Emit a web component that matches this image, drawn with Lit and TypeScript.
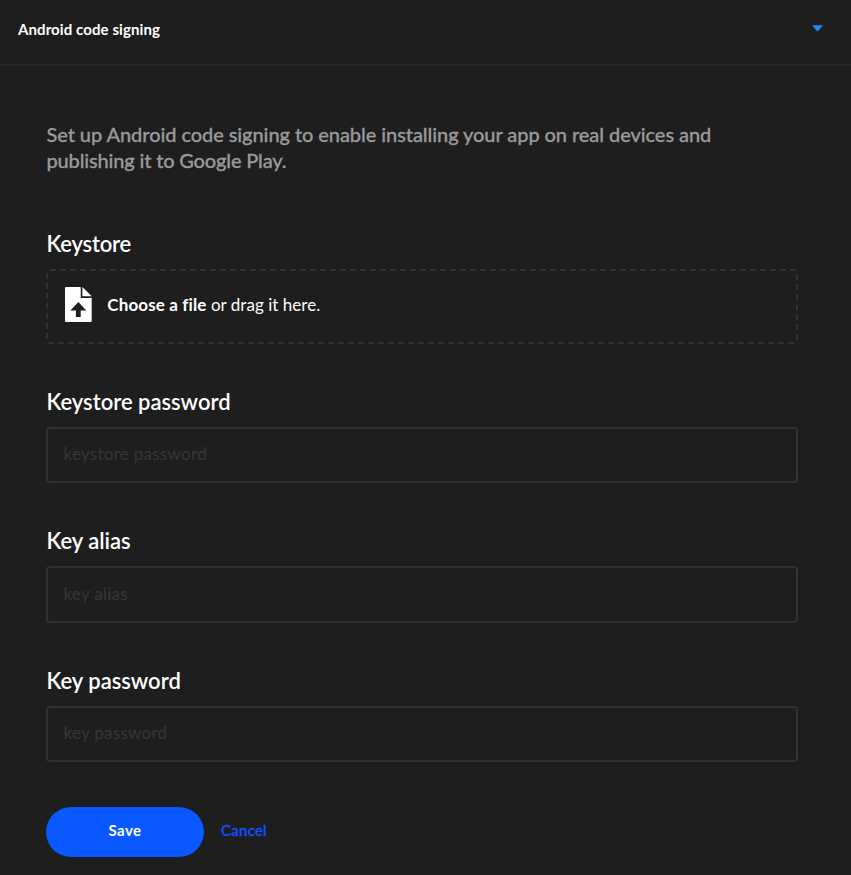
import { LitElement, html, css } from "lit";
import { customElement, property } from "lit/decorators.js";

@customElement("text-field")
class TextField extends LitElement {
  @property() label = "";
  @property() hint = "";

  static styles = css`
    :host { display: block; height: 139.6px; }
    .label { display: block; box-sizing: border-box; height: 40px; padding: 1px 0 0 0.5px; line-height: 28px; font-size: 22px; font-weight: 600; letter-spacing: -0.02px; color: #fff; white-space: nowrap; }
    .input { display: block; box-sizing: border-box; width: 100%; height: 56.35px; margin: 0; padding: 0 15.5px 2px; border: 2px solid #323232; border-radius: 4px; background: transparent; color: #fff; font: 17px Lato, "Liberation Sans", sans-serif; letter-spacing: 0.28px; outline: none; }
    .input::placeholder { color: #353535; opacity: 1; -webkit-text-stroke: 0.2px #353535; }
  `;

  render() {
    return html`<label class="label" for="field">${this.label}</label>
      <input class="input" id="field" placeholder=${this.hint} />`;
  }
}

@customElement("app-root")
class AppRoot extends LitElement {
  static styles = css`
    :host { display: block; box-sizing: border-box; height: 875px; overflow: hidden; background: #1e1e1e; color: #fff; font-family: Lato, "Liberation Sans", sans-serif; }
    .header { display: flex; justify-content: space-between; box-sizing: border-box; height: 66px; padding: 19px 28px 0 18px; border-bottom: 2px solid #292929; }
    .title { font-size: 15px; line-height: 20px; font-weight: 700; letter-spacing: 0.09px; white-space: nowrap; }
    .caret { display: block; width: 11px; height: 6px; margin-top: 6px; }
    .body { padding: 55px 53px 0 46px; }
    .intro { margin: 0; padding-left: 0.5px; height: 108.6px; font-size: 20px; line-height: 26px; font-weight: 500; color: #999; white-space: nowrap; -webkit-text-stroke: 0.3px #999; }
    .line1 { letter-spacing: -0.07px; }
    .line2 { letter-spacing: -0.16px; }
    .heading { height: 39.4px; padding-left: 0.5px; line-height: 28px; font-size: 22px; font-weight: 600; letter-spacing: -0.2px; }
    .drop { display: flex; align-items: center; box-sizing: border-box; height: 75px; margin-bottom: 42.6px; padding: 0 17px 4px; border: 2px dashed #323232; border-radius: 4px; }
    .file { display: block; width: 27px; height: 35px; margin-right: 15.3px; }
    .prompt { padding-top: 2px; font-size: 17px; line-height: 24px; letter-spacing: 0.03px; white-space: nowrap; }
    .strong { font-weight: 700; letter-spacing: 0.13px; }
    .actions { display: flex; align-items: center; gap: 17px; height: 50px; padding-top: 2px; }
    .save { width: 158px; height: 50px; padding: 0 0 4px; border: 0; border-radius: 25px; background: #0a58ff; color: #fff; font: 700 15px Lato, "Liberation Sans", sans-serif; letter-spacing: 0.4px; }
    .cancel { padding-bottom: 4px; font-size: 15px; line-height: 20px; font-weight: 500; letter-spacing: 0.25px; color: #1450ff; -webkit-text-stroke: 0.3px #1450ff; }
  `;

  render() {
    return html`
      <header class="header">
        <div class="title">Android code signing</div>
        <svg class="caret" viewBox="0 0 11 6"><path d="M0 .3H11L6.3 5.7Q5.5 6.4 4.7 5.7Z" fill="#1b8cf5" /></svg>
      </header>
      <main class="body">
        <p class="intro"><span class="line1">Set up Android code signing to enable installing your app on real devices and</span><br /><span class="line2">publishing it to Google Play.</span></p>
        <div class="heading">Keystore</div>
        <div class="drop">
          <svg class="file" viewBox="0 0 27 35">
            <path fill="#fff" fill-rule="evenodd" d="M1 0H15.7V11H26.7V34Q26.7 35 25.7 35H1Q0 35 0 34V1Q0 0 1 0ZM13.4 15L5.3 23.4H10.9V30H15.7V23.4H21.3Z" />
            <path fill="#fff" d="M17.4 0L26.7 9.3H17.4Z" />
          </svg>
          <div class="prompt"><span class="strong">Choose a file</span> or drag it here.</div>
        </div>
        <text-field label="Keystore password" hint="keystore password"></text-field>
        <text-field label="Key alias" hint="key alias"></text-field>
        <text-field label="Key password" hint="key password"></text-field>
        <div class="actions">
          <button class="save">Save</button>
          <span class="cancel">Cancel</span>
        </div>
      </main>`;
  }
}
